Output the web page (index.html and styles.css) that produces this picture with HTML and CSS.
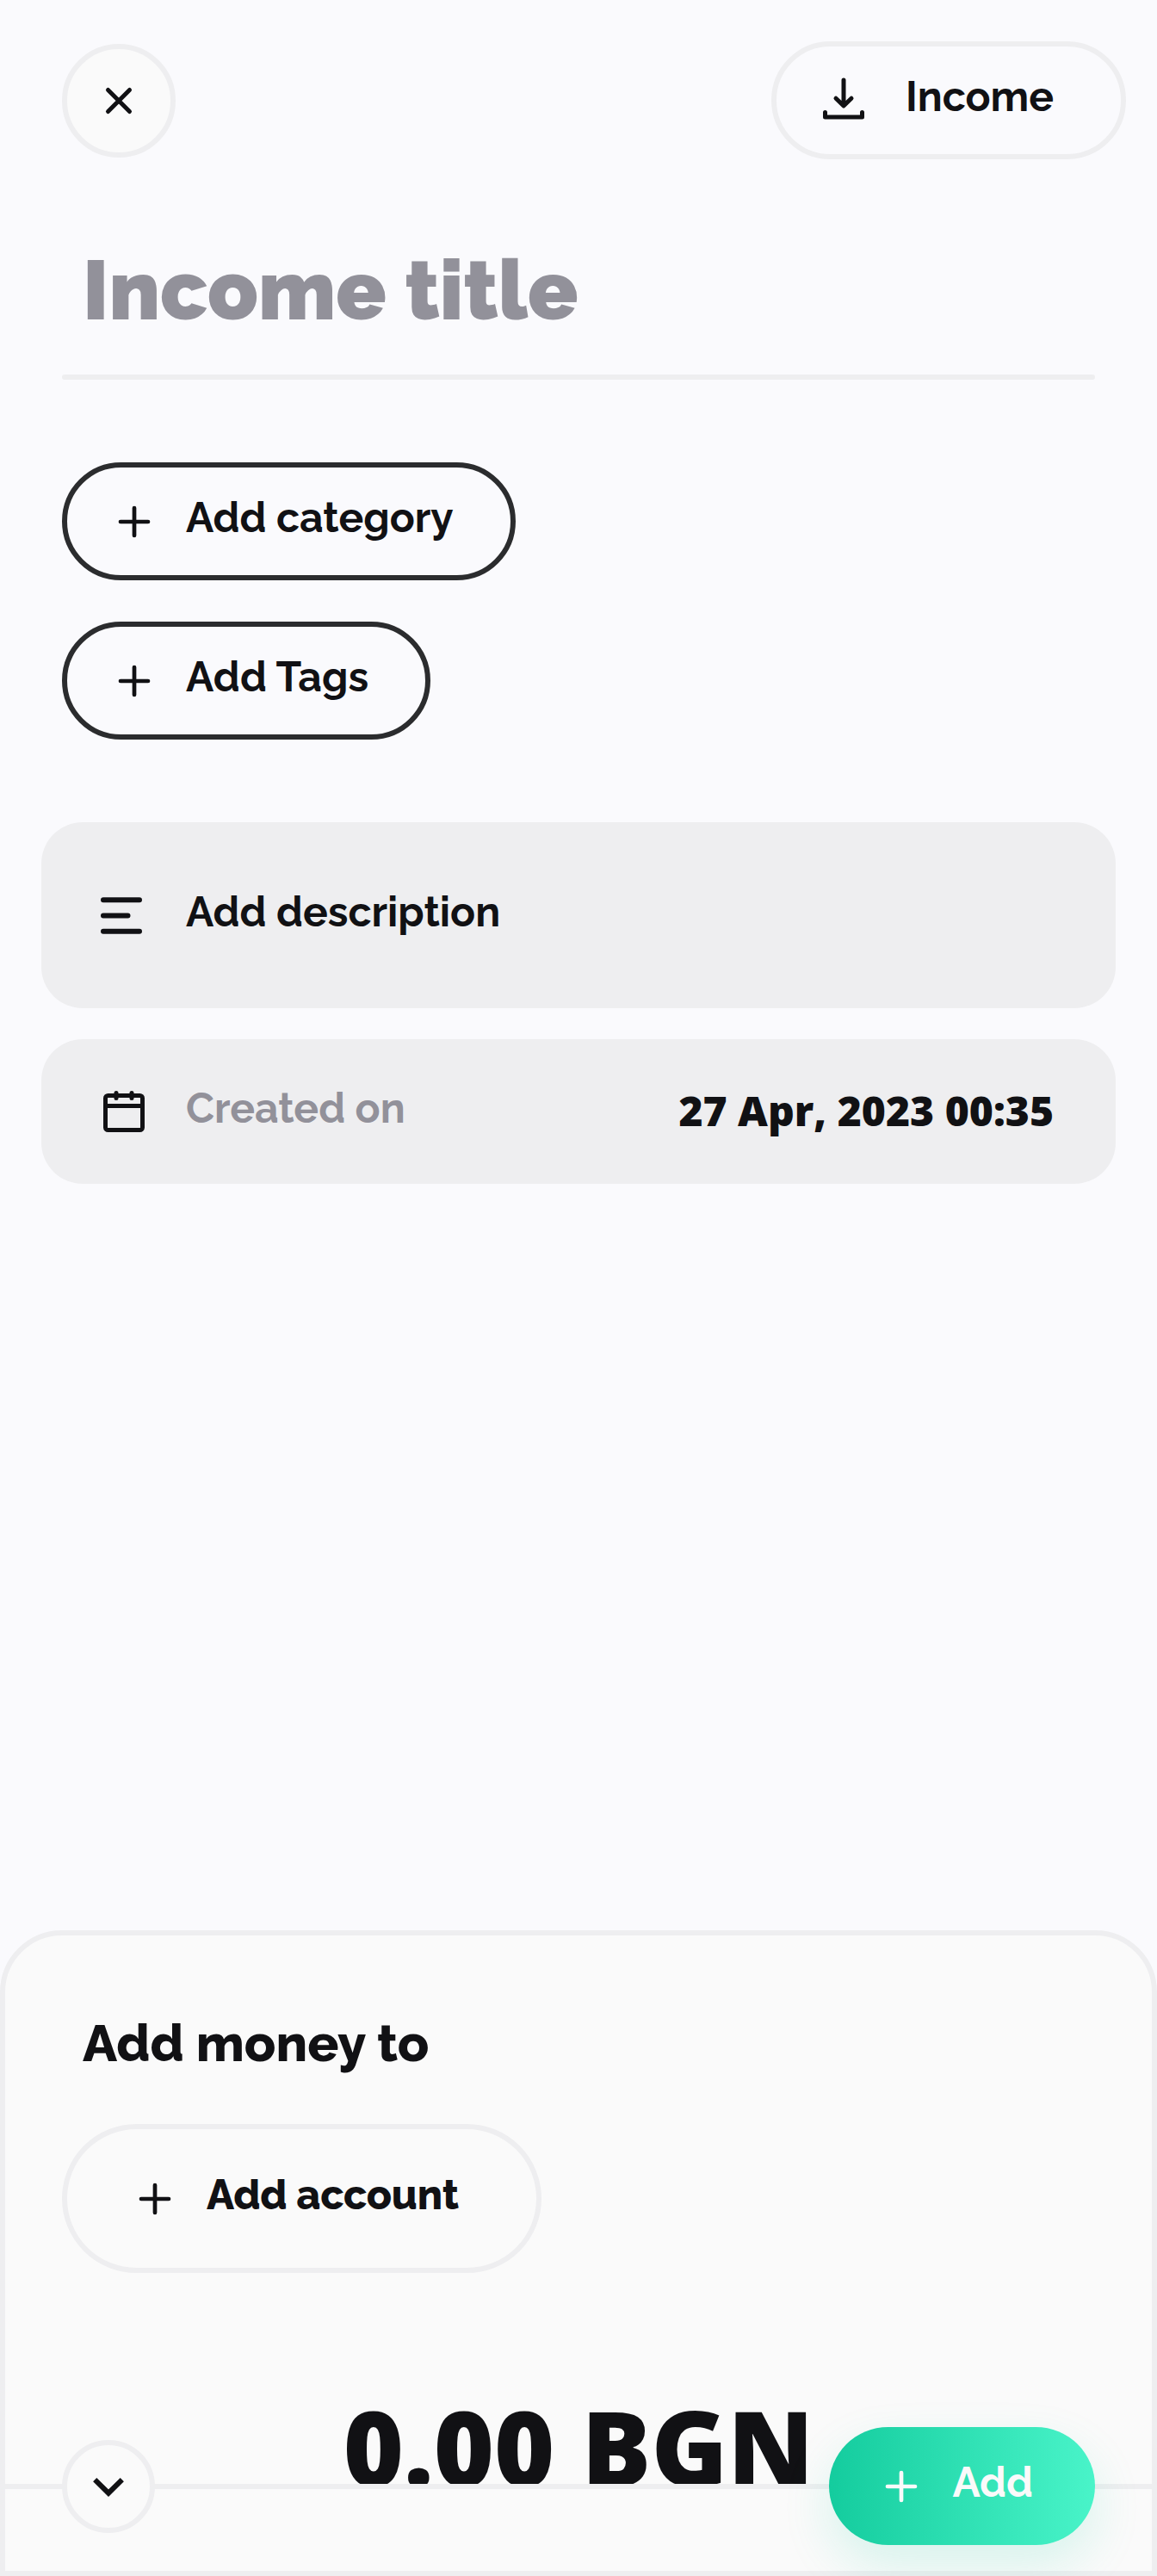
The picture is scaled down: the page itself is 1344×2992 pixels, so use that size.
FILE: index.html
```html
<!DOCTYPE html>
<html lang="en">
<head>
<meta charset="utf-8">
<title>Add income</title>
<link rel="stylesheet" href="styles.css">
</head>
<body>
<main class="screen">
  <header class="toolbar">
    <button class="close" aria-label="Close">
      <svg class="icon" viewBox="0 0 72 72"><path class="stroke-5" d="M23.5 23.5 48.5 48.5M48.5 23.5 23.5 48.5"/></svg>
    </button>
    <button class="pill pill-type">
      <svg class="icon" viewBox="0 0 72 72"><path class="stroke-5" d="M36 12V41.7M27 33.2 36 41.9 45 33.2M14.5 49.5V55H57.5V49.5"/></svg>
      <span class="label">Income</span>
    </button>
  </header>

  <h1 class="title">Income title</h1>
  <div class="divider"></div>

  <div class="chips">
    <button class="pill pill-outline">
      <svg class="icon" viewBox="0 0 72 72"><path class="stroke-4" d="M36 20V52M20 36H52"/></svg>
      <span class="label">Add category</span>
    </button>
    <button class="pill pill-outline">
      <svg class="icon" viewBox="0 0 72 72"><path class="stroke-4" d="M36 20V52M20 36H52"/></svg>
      <span class="label label-tags">Add Tags</span>
    </button>
  </div>

  <section class="cards">
    <div class="card card-description">
      <svg class="icon" viewBox="0 0 72 72"><path class="stroke-6" d="M15 18.2H57M15 36.4H43.5M15 54.7H57"/></svg>
      <span class="label">Add description</span>
    </div>
    <div class="card card-date">
      <svg class="icon" viewBox="0 0 72 72"><rect class="stroke-5" x="14.5" y="17.5" width="43" height="40" rx="3"/><path class="stroke-5" d="M14.5 29.5H57.5M27 14.5V20.5M45 14.5V20.5"/></svg>
      <span class="label muted">Created on</span>
      <span class="date">27 Apr, 2023 00:35</span>
    </div>
  </section>

  <section class="sheet">
    <h2 class="sheet-title">Add money to</h2>
    <button class="pill pill-account">
      <svg class="icon" viewBox="0 0 72 72"><path class="stroke-4" d="M36 20V52M20 36H52"/></svg>
      <span class="label">Add account</span>
    </button>
    <div class="amount">0.00 BGN</div>
    <footer class="actions">
      <button class="collapse" aria-label="Collapse">
        <svg class="icon" viewBox="0 0 72 72"><path class="chevron" d="M20.2 28.2 36 43.7 51.8 28.2"/></svg>
      </button>
      <button class="pill pill-add">
        <svg class="icon" viewBox="0 0 72 72"><path class="stroke-4" d="M36 20V52M20 36H52"/></svg>
        <span class="label">Add</span>
      </button>
    </footer>
  </section>
</main>
</body>
</html>
```
FILE: styles.css
```css
* {
  box-sizing: border-box;
}

body {
  margin: 0;
  background: #fafafd;
  color: #111114;
  font-family: Raleway, "Open Sans", sans-serif;
}

button {
  font: inherit;
  color: inherit;
  padding: 0;
  border: 0;
  background: none;
}

.screen {
  display: flex;
  flex-direction: column;
  height: 2992px;
  overflow: hidden;
}

.icon {
  flex: none;
  width: 72px;
  height: 72px;
  fill: none;
  stroke: currentColor;
  stroke-linecap: round;
  stroke-linejoin: round;
}

.stroke-4 { stroke-width: 4.7; }
.stroke-5 { stroke-width: 5; }
.stroke-6 { stroke-width: 6; }

.chevron {
  stroke-width: 6;
  stroke-linecap: butt;
  stroke-linejoin: miter;
}

.toolbar {
  display: flex;
  justify-content: space-between;
  align-items: flex-start;
  padding: 48px 36px 0 72px;
}

.close,
.collapse {
  display: flex;
  align-items: center;
  justify-content: center;
  border: 6px solid #eeeef0;
  border-radius: 50%;
  background: #fafafa;
}

.close {
  width: 132px;
  height: 132px;
  margin-top: 3px;
}

.pill {
  display: flex;
  align-items: center;
  height: 137px;
  border: 6px solid #eeeef0;
  border-radius: 87px;
}

.label {
  padding-bottom: 9px;
  font-size: 48px;
  font-weight: 700;
  line-height: 56px;
  white-space: nowrap;
}

.label-tags {
  letter-spacing: 0.2px;
}

.pill-type {
  gap: 36px;
  padding: 0 78px 0 42px;
}

.title {
  margin: 96px 96px 41px;
  color: #92919a;
  font-size: 96px;
  font-weight: 900;
  line-height: 113px;
}

.divider {
  height: 6px;
  margin: 0 72px;
  border-radius: 3px;
  background: #eeeef0;
}

.chips {
  display: flex;
  flex-direction: column;
  align-items: flex-start;
  gap: 48px;
  padding: 96px 72px;
}

.pill-outline {
  gap: 24px;
  padding: 0 66px 0 42px;
  border-color: #2b2c2e;
}

.cards {
  display: flex;
  flex-direction: column;
  gap: 36px;
  padding: 0 48px;
}

.card {
  display: flex;
  align-items: center;
  border-radius: 48px;
  background: #eeeef0;
}

.card-description {
  gap: 39px;
  height: 216px;
  padding-left: 57px;
}

.card-date {
  gap: 36px;
  height: 168px;
  padding: 0 72px 0 60px;
}

.muted {
  color: #92919a;
}

.date {
  margin-left: auto;
  padding-bottom: 3px;
  font-family: "Open Sans", sans-serif;
  font-size: 48px;
  font-weight: 800;
  line-height: 66px;
}

.sheet {
  position: relative;
  display: flex;
  flex-direction: column;
  align-items: flex-start;
  height: 750px;
  margin-top: auto;
  padding: 90px 66px 0;
  border: 6px solid #eeeef0;
  border-radius: 72px 72px 0 0;
  background: #fafafa;
}

.sheet-title {
  margin: 0 24px 59px;
  font-size: 60px;
  font-weight: 800;
  line-height: 70px;
}

.pill-account {
  gap: 24px;
  height: 173px;
  padding: 0 90px 0 66px;
}

.pill-account .label {
  font-weight: 800;
  letter-spacing: -0.28px;
}

.amount {
  align-self: center;
  height: 125px;
  margin-top: 120px;
  overflow: hidden;
  font-family: "Open Sans", sans-serif;
  font-size: 120px;
  font-weight: 800;
  line-height: 164px;
}

/* Floating actions sit on top of the amount, joined by a hairline. */
.actions {
  position: absolute;
  right: 0;
  bottom: 30px;
  left: 0;
  display: flex;
  align-items: center;
  justify-content: space-between;
  height: 137px;
  padding: 0 66px;
}

.actions::before {
  content: "";
  position: absolute;
  top: 66px;
  right: 0;
  left: 0;
  height: 6px;
  background: #eeeef0;
}

.collapse,
.pill-add {
  position: relative;
}

.collapse {
  width: 108px;
  height: 108px;
}

.pill-add {
  gap: 24px;
  padding: 0 72px 0 48px;
  border: 0;
  background: linear-gradient(90deg, #14cc9e, #49f4c9);
  box-shadow: 0 24px 56px rgba(18, 205, 160, 0.15);
  color: #fafafa;
}
```
